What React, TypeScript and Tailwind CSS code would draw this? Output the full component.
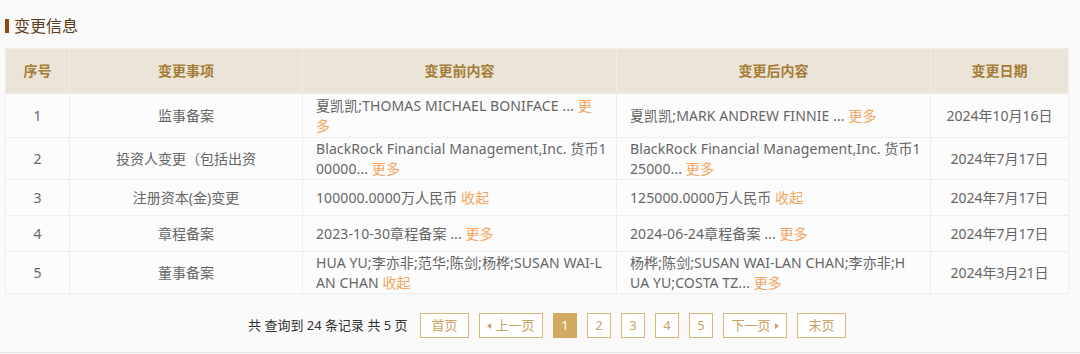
import React from "react";

const More = ({ children }: { children: React.ReactNode }) => (
  <span className="text-[#f5a55e]">{children}</span>
);

const rows = [
  {
    no: 1,
    item: "监事备案",
    before: (
      <>
        夏凯凯;THOMAS MICHAEL BONIFACE ... <More>更</More>
        <br />
        <More>多</More>
      </>
    ),
    after: (
      <>
        夏凯凯;MARK ANDREW FINNIE ... <More>更多</More>
      </>
    ),
    date: "2024年10月16日",
    h: "h-[44px]",
  },
  {
    no: 2,
    item: "投资人变更（包括出资",
    before: (
      <>
        BlackRock Financial Management,Inc. 货币1
        <br />
        00000... <More>更多</More>
      </>
    ),
    after: (
      <>
        BlackRock Financial Management,Inc. 货币1
        <br />
        25000... <More>更多</More>
      </>
    ),
    date: "2024年7月17日",
    h: "h-[42px]",
  },
  {
    no: 3,
    item: "注册资本(金)变更",
    before: (
      <>
        100000.0000万人民币 <More>收起</More>
      </>
    ),
    after: (
      <>
        125000.0000万人民币 <More>收起</More>
      </>
    ),
    date: "2024年7月17日",
    h: "h-[36px]",
  },
  {
    no: 4,
    item: "章程备案",
    before: (
      <>
        2023-10-30章程备案 ... <More>更多</More>
      </>
    ),
    after: (
      <>
        2024-06-24章程备案 ... <More>更多</More>
      </>
    ),
    date: "2024年7月17日",
    h: "h-[36px]",
  },
  {
    no: 5,
    item: "董事备案",
    before: (
      <>
        HUA YU;李亦非;范华;陈剑;杨桦;SUSAN WAI-L
        <br />
        AN CHAN <More>收起</More>
      </>
    ),
    after: (
      <>
        杨桦;陈剑;SUSAN WAI-LAN CHAN;李亦非;H
        <br />
        UA YU;COSTA TZ... <More>更多</More>
      </>
    ),
    date: "2024年3月21日",
    h: "h-[42px]",
  },
];

const pages = ["1", "2", "3", "4", "5"];

export default function App() {
  return (
    <div className="w-[1080px] h-[354px] bg-[#fafafa] font-['Noto_Sans','Noto_Sans_CJK_SC',sans-serif] overflow-hidden">
      <div className="flex items-center gap-[5px] pl-[5px] pt-[16px] h-[48px] pb-[12px]">
        <span className="w-[4px] h-[14px] bg-[#8a4a12]" />
        <h2 className="text-[16px] leading-[20px] text-[#5a3c1f]">变更信息</h2>
      </div>

      <div className="px-[5px]">
        <table className="w-[1063px] table-fixed border-collapse text-[14px] leading-[20px] text-[#666]">
          <colgroup>
            <col className="w-[64px]" />
            <col className="w-[233px]" />
            <col className="w-[314px]" />
            <col className="w-[314px]" />
            <col className="w-[138px]" />
          </colgroup>
          <thead>
            <tr className="h-[45px] bg-[#ebe4d8] text-[#a57c35] font-bold">
              <th className="border border-[#f1ede6]">序号</th>
              <th className="border border-[#f1ede6]">变更事项</th>
              <th className="border border-[#f1ede6]">变更前内容</th>
              <th className="border border-[#f1ede6]">变更后内容</th>
              <th className="border border-[#f1ede6]">变更日期</th>
            </tr>
          </thead>
          <tbody className="bg-[#fcfcfc]">
            {rows.map((r) => (
              <tr key={r.no} className={r.h}>
                <td className="border border-[#eeeeee] text-center p-0">{r.no}</td>
                <td className="border border-[#eeeeee] text-center p-0 whitespace-nowrap overflow-hidden">
                  {r.item}
                </td>
                <td className="border border-[#eeeeee] pl-[13px] pr-[4px] py-0 whitespace-nowrap tracking-[0.1px]">
                  {r.before}
                </td>
                <td className="border border-[#eeeeee] pl-[13px] pr-[4px] py-0 whitespace-nowrap tracking-[0.1px]">
                  {r.after}
                </td>
                <td className="border border-[#eeeeee] text-center p-0">{r.date}</td>
              </tr>
            ))}
          </tbody>
        </table>
      </div>

      <div className="pt-[19px] pb-[14px] border-b border-[#e6e6e6]">
        <div className="flex items-center ml-[248px] h-[25px]">
          <span className="w-[172px] text-[13px] text-[#333] whitespace-nowrap">共 查询到 24 条记录 共 5 页</span>
          <div className="flex items-center gap-[10px] text-[13px] text-[#c9a264]">
            <button className="h-[25px] w-[49px] border border-[#dcb677] bg-white">首页</button>
            <button className="h-[25px] w-[64px] border border-[#dcb677] bg-white flex items-center justify-center gap-[4px]">
              <span className="w-0 h-0 border-y-[3px] border-y-transparent border-r-[4px] border-r-[#c9a264]" />
              上一页
            </button>
            {pages.map((p) => (
              <button
                key={p}
                className={
                  p === "1"
                    ? "h-[25px] w-[24px] bg-[#d3aa62] text-white"
                    : "h-[25px] w-[24px] border border-[#dcb677] bg-white"
                }
              >
                {p}
              </button>
            ))}
            <button className="h-[25px] w-[64px] border border-[#dcb677] bg-white flex items-center justify-center gap-[4px]">
              下一页
              <span className="w-0 h-0 border-y-[3px] border-y-transparent border-l-[4px] border-l-[#c9a264]" />
            </button>
            <button className="h-[25px] w-[49px] border border-[#dcb677] bg-white">末页</button>
          </div>
        </div>
      </div>
    </div>
  );
}
